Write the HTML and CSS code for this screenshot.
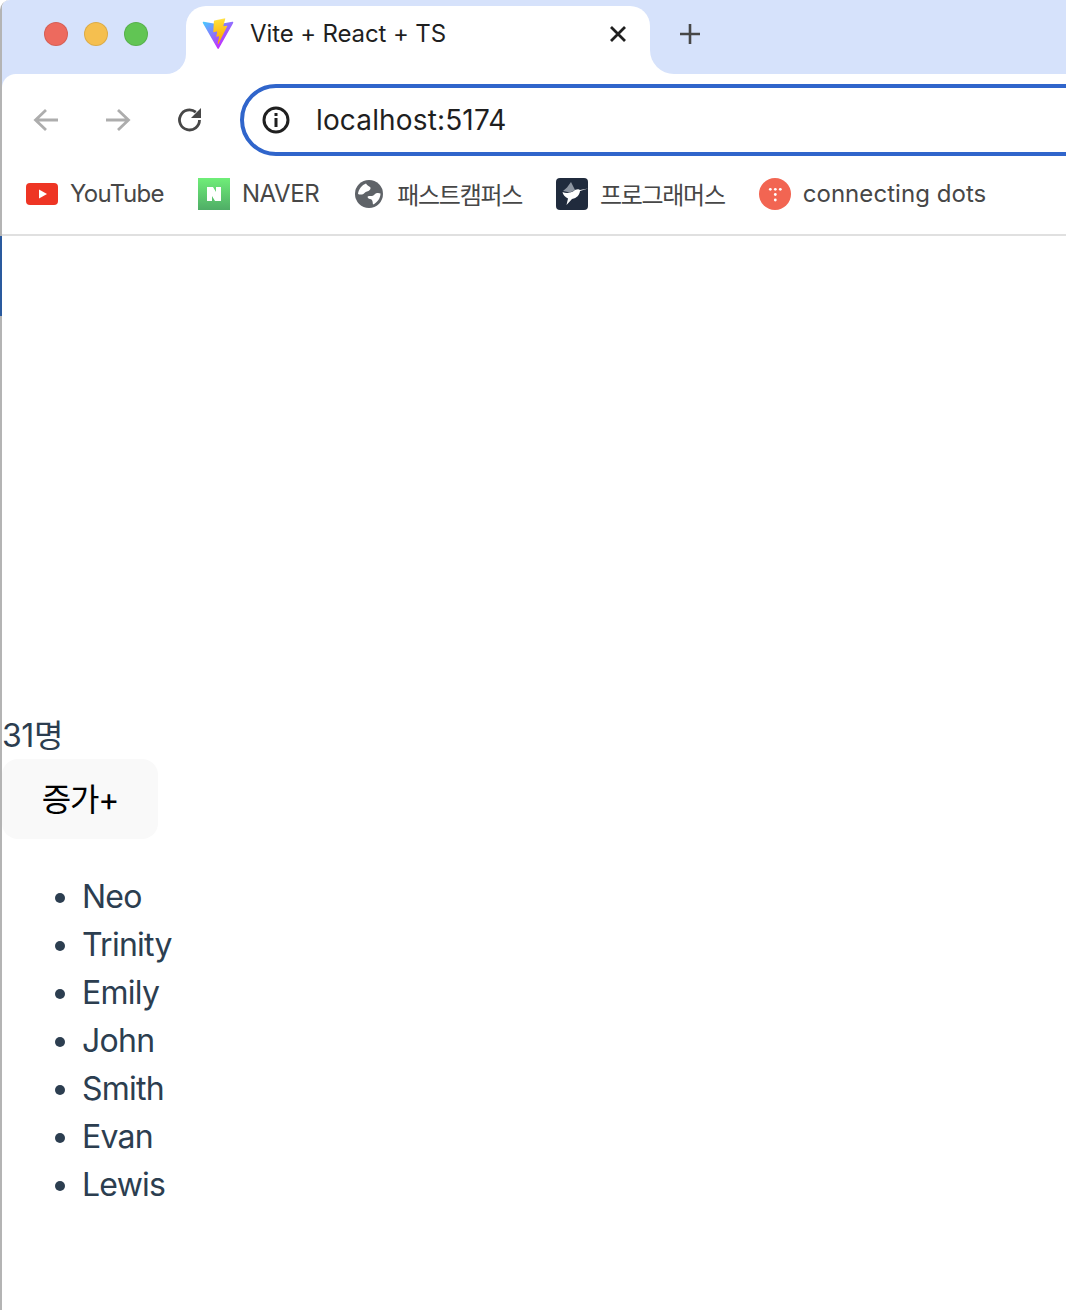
FILE: index.html
```html
<!DOCTYPE html>
<html lang="ko">
<head>
<meta charset="utf-8">
<title>Vite + React + TS</title>
<link rel="stylesheet" href="styles.css">
</head>
<body>
<div class="window">
  <span class="edge-mark"></span>
  <header class="chrome">
    <div class="strip">
      <div class="strip-left">
        <span class="light light-red"></span>
        <span class="light light-yellow"></span>
        <span class="light light-green"></span>
      </div>
      <div class="tab-wrap">
        <div class="tab">
          <svg class="vite" viewBox="0 0 410 404">
            <defs>
              <linearGradient id="va" gradientUnits="userSpaceOnUse" x1="6" y1="33" x2="235" y2="344"><stop stop-color="#41D1FF"/><stop offset="1" stop-color="#BD34FE"/></linearGradient>
              <linearGradient id="vb" gradientUnits="userSpaceOnUse" x1="194.651" y1="8.818" x2="236.076" y2="292.989"><stop stop-color="#FFEA83"/><stop offset=".083" stop-color="#FFDD35"/><stop offset="1" stop-color="#FFA800"/></linearGradient>
            </defs>
            <path fill="url(#va)" d="M399.641 59.5246L215.643 388.545C211.844 395.338 202.084 395.378 198.228 388.618L10.5817 59.5563C6.38087 52.1896 12.6802 43.2665 21.0281 44.7586L205.223 77.6824C206.398 77.8924 207.601 77.8904 208.776 77.6763L389.119 44.8058C397.439 43.2894 403.768 52.1434 399.641 59.5246Z"/>
            <path fill="url(#vb)" d="M292.965 1.5744L156.801 28.2552C154.563 28.6937 152.906 30.5903 152.771 32.8664L144.395 174.33C144.198 177.662 147.258 180.248 150.51 179.498L188.42 170.749C191.967 169.931 195.172 173.055 194.443 176.622L183.18 231.775C182.422 235.487 185.907 238.661 189.532 237.56L212.947 230.446C216.577 229.344 220.065 232.527 219.297 236.242L201.398 322.875C200.278 328.294 207.486 331.249 210.492 326.603L212.5 323.5L323.454 102.072C325.312 98.3645 322.108 94.137 318.036 94.9228L279.014 102.454C275.347 103.161 272.227 99.746 273.262 96.1583L298.731 7.86689C299.767 4.27314 296.636 0.855181 292.965 1.5744Z"/>
          </svg>
          <span class="tab-title">Vite + React + TS</span>
          <svg class="tab-close" viewBox="0 0 16 16"><path d="M1 1L15 15M15 1L1 15"/></svg>
        </div>
      </div>
      <div class="strip-right">
        <svg class="new-tab" viewBox="0 0 20 20"><path d="M10 0V20M0 10H20"/></svg>
      </div>
    </div>
    <div class="toolbar">
      <svg class="nav nav-back" viewBox="0 0 26 24"><path d="M25 12H3M13 2L2.500 12L13 22"/></svg>
      <svg class="nav nav-forward" viewBox="0 0 26 24"><path d="M1 12H23M13 2L23.500 12L13 22"/></svg>
      <svg class="nav nav-reload" viewBox="0 0 26 26"><path d="M22.500 13A10 10 0 1 1 18.800 5.200"/><path class="fill" d="M24 1V11H14Z"/></svg>
      <div class="omnibox">
        <svg class="info" viewBox="0 0 28 28"><circle cx="14" cy="14" r="12"/><rect x="12.500" y="12" width="3" height="9"/><rect x="12.500" y="7" width="3" height="3"/></svg>
        <span class="url">localhost:5174</span>
      </div>
    </div>
    <nav class="bookmarks">
      <a class="bookmark bookmark-youtube">
        <svg class="icon" viewBox="0 0 32 32"><rect y="5" width="32" height="22" rx="4" fill="#ee3524"/><path d="M13 11.500L21 16L13 20.500Z" fill="#fff"/></svg>
        <span class="bookmark-label">YouTube</span>
      </a>
      <a class="bookmark bookmark-naver">
        <svg class="icon" viewBox="0 0 32 32"><defs><linearGradient id="ng" x1="0" y1="0" x2="0" y2="1"><stop stop-color="#6fee78"/><stop offset="1" stop-color="#4fad66"/></linearGradient></defs><rect width="32" height="32" fill="url(#ng)"/><path d="M9 9H15L18 14V9H23V23H17L14 18V23H9Z" fill="#fff"/></svg>
        <span class="bookmark-label">NAVER</span>
      </a>
      <a class="bookmark bookmark-korean">
        <svg class="icon" viewBox="0 0 32 32"><circle cx="16" cy="16" r="14" fill="#5f6368"/><path d="M5 16C5.500 11 9 7 13 5.500C14 7.500 16 8 17.500 9.500C18 11.500 16 13 14 13.500C12 14 11 16 9 16.500C7.500 16.800 6 16.500 5 16Z" fill="#fff"/><path d="M27.500 15.500C27.500 20 24.500 24.500 20 26.500C19.500 25 20 23 18.500 21.500C16.500 20.500 15 21 14.500 19C15 17.500 17 18 19 18C21 17.500 22 15.500 24 15C25.500 14.800 26.500 15 27.500 15.500Z" fill="#fff"/></svg>
        <span class="bookmark-label">패스트캠퍼스</span>
      </a>
      <a class="bookmark bookmark-korean">
        <svg class="icon" viewBox="0 0 32 32"><rect width="32" height="32" rx="4" fill="#202b3d"/><path d="M7 13L11 9.500L15 4L17 8L19 12L14 14.500Z" fill="#8d95a1"/><path d="M6.500 14C10 15.500 14 15 17 13.500C19 12 21 11 23 11.500L24 12L32 10.500L24 13C23.500 17 21 20 16 21L10.500 27L12 20.500C9 19 7 17 6.500 14Z" fill="#fff"/></svg>
        <span class="bookmark-label">프로그래머스</span>
      </a>
      <a class="bookmark bookmark-dots">
        <svg class="icon" viewBox="0 0 32 32"><circle cx="16" cy="16" r="16" fill="#f26552"/><circle cx="11.300" cy="11.300" r="1.400" fill="#fff"/><circle cx="16.300" cy="11.300" r="1.400" fill="#fff"/><circle cx="21.300" cy="11.300" r="1.400" fill="#fff"/><circle cx="16.300" cy="16.500" r="1.400" fill="#fff"/><circle cx="16.300" cy="22" r="1.400" fill="#fff"/></svg>
        <span class="bookmark-label">connecting dots</span>
      </a>
    </nav>
  </header>
  <main class="page">
    <div class="count">31명</div>
    <button class="add" type="button">증가+</button>
    <ul class="names">
      <li>Neo</li>
      <li>Trinity</li>
      <li>Emily</li>
      <li>John</li>
      <li>Smith</li>
      <li>Evan</li>
      <li>Lewis</li>
    </ul>
  </main>
</div>
</body>
</html>
```
FILE: styles.css
```css
html, body {
  margin: 0;
  height: 100%;
  background: #fff;
}
body {
  overflow: hidden;
  font-family: Inter, "Noto Sans CJK KR", sans-serif;
}
.window {
  height: 1310px;
  box-sizing: border-box;
  border-left: 2px solid #b4b4b4;
  border-top-left-radius: 10px;
  position: relative;
}
.edge-mark {
  position: absolute;
  left: -2px;
  top: 236px;
  width: 2px;
  height: 80px;
  background: #2a5a9e;
}
.chrome {
  overflow: hidden;
  border-top-left-radius: 8px;
}
.strip {
  display: flex;
  height: 74px;
  background: #fff;
}
.strip-left {
  width: 184px;
  box-sizing: border-box;
  padding: 22px 0 0 42px;
  display: flex;
  gap: 16px;
  background: #d6e2fb;
  border-bottom-right-radius: 20px;
}
.light {
  width: 24px;
  height: 24px;
  box-sizing: border-box;
  border-radius: 50%;
  border: 1px solid rgba(0, 0, 0, .1);
}
.light-red { background: #ed6a5e; }
.light-yellow { background: #f5bf4f; }
.light-green { background: #61c554; }
.tab-wrap {
  width: 464px;
  padding-top: 6px;
  box-sizing: border-box;
  background: #d6e2fb;
}
.tab {
  height: 68px;
  background: #fff;
  border-radius: 20px 20px 0 0;
  display: flex;
  align-items: flex-start;
  box-sizing: border-box;
  padding: 12px 0 0 16px;
  position: relative;
}
.vite {
  width: 32px;
  height: 32px;
  flex: none;
}
.tab-title {
  margin-left: 16px;
  font-size: 24px;
  line-height: 32px;
  letter-spacing: -0.12px;
  color: #1f1f1f;
}
.tab-close {
  position: absolute;
  left: 424px;
  top: 20px;
  width: 16px;
  height: 16px;
  fill: none;
  stroke: #1f1f1f;
  stroke-width: 2.800;
}
.strip-right {
  flex: 1;
  background: #d6e2fb;
  border-bottom-left-radius: 24px;
  padding: 24px 0 0 30px;
}
.new-tab {
  display: block;
  width: 20px;
  height: 20px;
  fill: none;
  stroke: #474747;
  stroke-width: 2.600;
}
.toolbar {
  height: 84px;
  box-sizing: border-box;
  padding-top: 8px;
  display: flex;
  align-items: center;
  position: relative;
}
.toolbar::before {
  content: "";
  position: absolute;
  left: 0;
  top: 0;
  width: 14px;
  height: 14px;
  background: radial-gradient(circle at 100% 100%, transparent 13.5px, #d6e2fb 14.5px);
}
.nav {
  flex: none;
  fill: none;
  stroke-width: 2.800;
}
.nav-back, .nav-forward {
  width: 26px;
  height: 24px;
  stroke: #adadad;
}
.nav-back { margin-left: 31px; }
.nav-forward { margin-left: 46px; }
.nav-reload {
  width: 26px;
  height: 26px;
  margin-left: 46px;
  stroke: #474747;
}
.nav-reload .fill {
  fill: #474747;
  stroke: none;
}
.omnibox {
  flex: none;
  width: 1000px;
  height: 72px;
  margin-left: 37px;
  box-sizing: border-box;
  border: 4px solid #3065cb;
  border-radius: 36px;
  display: flex;
  align-items: center;
  padding-left: 18px;
}
.info {
  width: 28px;
  height: 28px;
  fill: #1f1f1f;
}
.info circle {
  fill: none;
  stroke: #1f1f1f;
  stroke-width: 3;
}
.url {
  margin-left: 26px;
  font-size: 28px;
  letter-spacing: 0.15px;
  color: #1f1f1f;
}
.bookmarks {
  height: 78px;
  box-sizing: border-box;
  padding: 0 0 4px 24px;
  display: flex;
  align-items: center;
  gap: 34px;
  border-bottom: 2px solid #e0e0e0;
}
.bookmark {
  display: flex;
  align-items: center;
  gap: 12px;
  font-size: 24px;
  color: #474747;
}
.bookmark-label { padding-bottom: 2px; }
.bookmark-youtube { letter-spacing: -0.65px; }
.bookmark-naver { letter-spacing: -0.4px; }
.bookmark-korean { letter-spacing: -1.3px; }
.bookmark-dots { letter-spacing: 0.05px; }
.icon {
  width: 32px;
  height: 32px;
  flex: none;
}
.page {
  padding-top: 475px;
  font-size: 32px;
  line-height: 48px;
  letter-spacing: -0.75px;
  color: #2c3e50;
}
.count {
  height: 48px;
  line-height: 50px;
  letter-spacing: -0.4px;
}
.add {
  display: block;
  width: 156px;
  height: 80px;
  border: 0;
  border-radius: 16px;
  padding: 2px 0 0;
  background: #f9f9f9;
  font: inherit;
  letter-spacing: -1.2px;
  color: #000;
}
.names {
  margin: 34px 0 0;
  padding: 0 0 0 80px;
}
```
